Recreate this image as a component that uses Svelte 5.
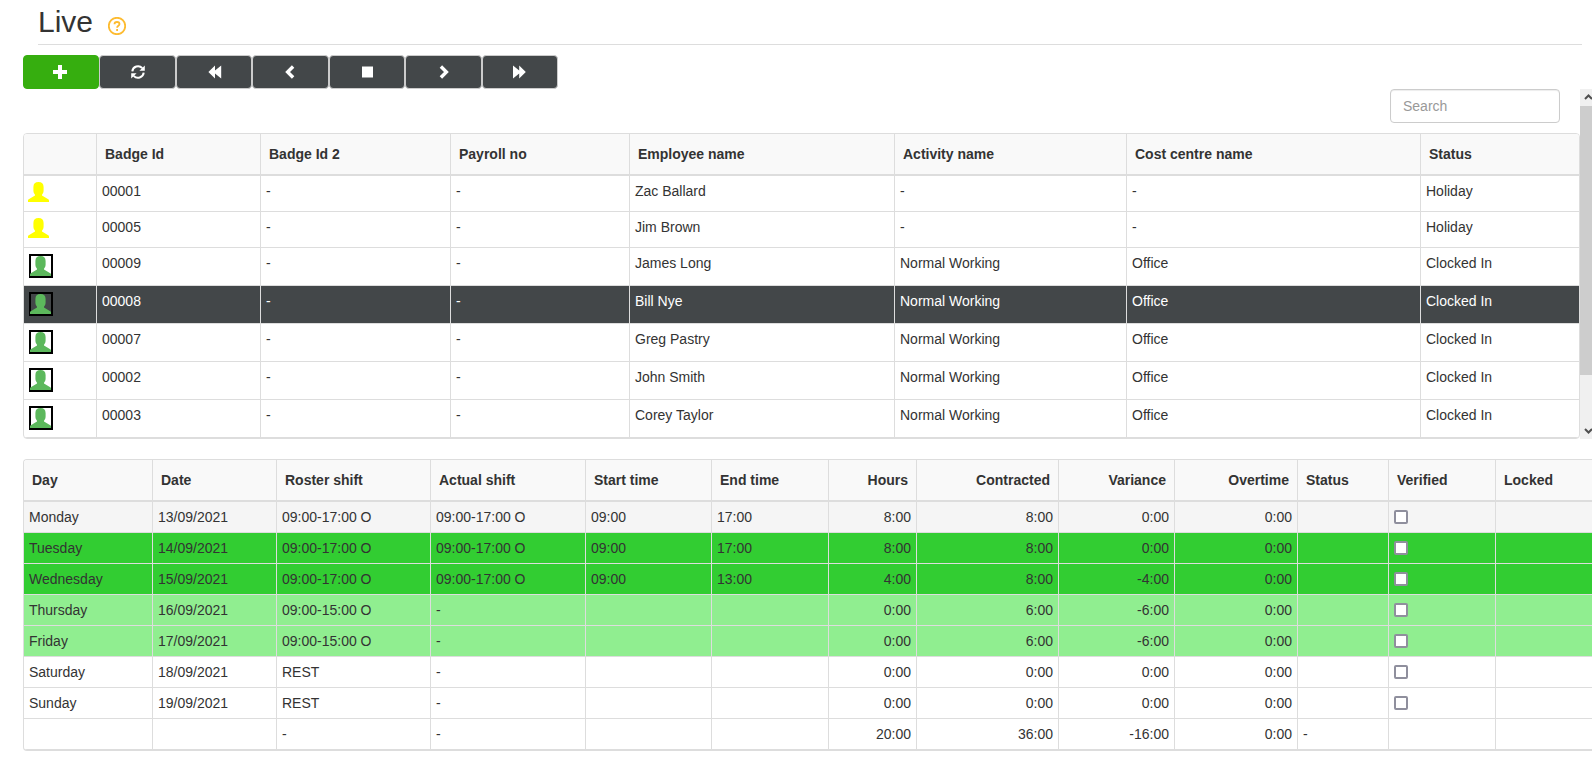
<script lang="ts">
	interface Employee {
		badge: string;
		name: string;
		activity: string;
		costCentre: string;
		status: string;
	}

	interface Day {
		day: string;
		date: string;
		roster: string;
		actual: string;
		start: string;
		end: string;
		hours: string;
		contracted: string;
		variance: string;
		overtime: string;
		tone: string;
		verified: boolean;
	}

	const employeeColumns = [
		{ label: '', width: 72 },
		{ label: 'Badge Id', width: 164 },
		{ label: 'Badge Id 2', width: 190 },
		{ label: 'Payroll no', width: 179 },
		{ label: 'Employee name', width: 265 },
		{ label: 'Activity name', width: 232 },
		{ label: 'Cost centre name', width: 294 },
		{ label: 'Status', width: 159 }
	];

	const dayColumns = [
		{ label: 'Day', width: 128 },
		{ label: 'Date', width: 124 },
		{ label: 'Roster shift', width: 154 },
		{ label: 'Actual shift', width: 155 },
		{ label: 'Start time', width: 126 },
		{ label: 'End time', width: 117 },
		{ label: 'Hours', width: 88, numeric: true },
		{ label: 'Contracted', width: 142, numeric: true },
		{ label: 'Variance', width: 116, numeric: true },
		{ label: 'Overtime', width: 123, numeric: true },
		{ label: 'Status', width: 91 },
		{ label: 'Verified', width: 107 },
		{ label: 'Locked', width: 97 }
	];

	const employees: Employee[] = [
		{ badge: '00001', name: 'Zac Ballard', activity: '-', costCentre: '-', status: 'Holiday' },
		{ badge: '00005', name: 'Jim Brown', activity: '-', costCentre: '-', status: 'Holiday' },
		{ badge: '00009', name: 'James Long', activity: 'Normal Working', costCentre: 'Office', status: 'Clocked In' },
		{ badge: '00008', name: 'Bill Nye', activity: 'Normal Working', costCentre: 'Office', status: 'Clocked In' },
		{ badge: '00007', name: 'Greg Pastry', activity: 'Normal Working', costCentre: 'Office', status: 'Clocked In' },
		{ badge: '00002', name: 'John Smith', activity: 'Normal Working', costCentre: 'Office', status: 'Clocked In' },
		{ badge: '00003', name: 'Corey Taylor', activity: 'Normal Working', costCentre: 'Office', status: 'Clocked In' }
	];

	let days: Day[] = $state([
		{ day: 'Monday', date: '13/09/2021', roster: '09:00-17:00 O', actual: '09:00-17:00 O', start: '09:00', end: '17:00', hours: '8:00', contracted: '8:00', variance: '0:00', overtime: '0:00', tone: 'hovered', verified: false },
		{ day: 'Tuesday', date: '14/09/2021', roster: '09:00-17:00 O', actual: '09:00-17:00 O', start: '09:00', end: '17:00', hours: '8:00', contracted: '8:00', variance: '0:00', overtime: '0:00', tone: 'worked', verified: false },
		{ day: 'Wednesday', date: '15/09/2021', roster: '09:00-17:00 O', actual: '09:00-17:00 O', start: '09:00', end: '13:00', hours: '4:00', contracted: '8:00', variance: '-4:00', overtime: '0:00', tone: 'worked', verified: false },
		{ day: 'Thursday', date: '16/09/2021', roster: '09:00-15:00 O', actual: '-', start: '', end: '', hours: '0:00', contracted: '6:00', variance: '-6:00', overtime: '0:00', tone: 'planned', verified: false },
		{ day: 'Friday', date: '17/09/2021', roster: '09:00-15:00 O', actual: '-', start: '', end: '', hours: '0:00', contracted: '6:00', variance: '-6:00', overtime: '0:00', tone: 'planned', verified: false },
		{ day: 'Saturday', date: '18/09/2021', roster: 'REST', actual: '-', start: '', end: '', hours: '0:00', contracted: '0:00', variance: '0:00', overtime: '0:00', tone: '', verified: false },
		{ day: 'Sunday', date: '19/09/2021', roster: 'REST', actual: '-', start: '', end: '', hours: '0:00', contracted: '0:00', variance: '0:00', overtime: '0:00', tone: '', verified: false }
	]);

	const tools = ['Add', 'Refresh', 'First', 'Previous', 'Stop', 'Next', 'Last'];

	let selected = $state('00008');
	let search = $state('');

	let visible = $derived(
		employees.filter((e) => e.name.toLowerCase().includes(search.toLowerCase()))
	);
</script>

{#snippet toolIcon(name: string)}
	<svg class="tool-icon" viewBox="0 0 14 14" aria-hidden="true">
		{#if name === 'Add'}
			<path d="M4 0h4v5h5v4H8v5H4V9h-5V5h5z" />
		{:else if name === 'Refresh'}
			<path class="stroke" d="M1.300 6.300A5.700 5.700 0 0 1 11.300 3.200M12.700 7.700A5.700 5.700 0 0 1 2.700 10.800" />
			<path d="M13.800.4v5.400H8.400zM.2 13.600V8.200h5.400z" />
		{:else if name === 'First'}
			<path d="M1.400 7 8 .5v5L14.200.5v13L8 8.500v5z" />
		{:else if name === 'Previous'}
			<path d="M8.900.3 11.300 2.700 7 7l4.300 4.300-2.400 2.400L2.200 7z" />
		{:else if name === 'Stop'}
			<path d="M2 1.500h11v11H2z" />
		{:else if name === 'Next'}
			<path d="M6.100.3 3.700 2.700 8 7l-4.300 4.300 2.400 2.400L12.800 7z" />
		{:else}
			<path d="M12.800 7 6.200.5v5L0 .5v13l6.200-5v5z" />
		{/if}
	</svg>
{/snippet}

{#snippet person(clockedIn: boolean)}
	<svg class="person" class:clocked-in={clockedIn} viewBox={clockedIn ? '-2 -3 25 27' : '0 -1 25 25'} role="img" aria-label={clockedIn ? 'Clocked in' : 'Holiday'}>
		{#if clockedIn}
			<rect x="0" y="-1" width="22" height="22" />
		{/if}
		<path d="M10.500 0C13.800 0 15.600 1.800 15.600 5v3.500c0 1.800-.7 3.200-1.600 4.200v.8l5.800 3.400c.9.500 1.200.9 1.200 1.600V20H0v-1.500c0-.7.3-1.100 1.200-1.600L7 13.500v-.8c-.9-1-1.600-2.400-1.600-4.200V5C5.400 1.800 7.200 0 10.500 0z" />
	</svg>
{/snippet}

<main>
	<header>
		<h1>Live</h1>
		<button class="help" aria-label="Help">
			<svg viewBox="0 0 18 18" aria-hidden="true">
				<circle cx="9" cy="9" r="8.200" />
				<path d="M6.500 7.200C6.500 5.700 7.500 5 9 5s2.500.8 2.500 2c0 1.700-2.400 1.700-2.400 3.700" />
				<path d="M9.100 12v2" />
			</svg>
		</button>
	</header>

	<div class="toolbar" role="toolbar" aria-label="Live controls">
		{#each tools as tool}
			<button class="tool" class:add={tool === 'Add'} aria-label={tool}>
				{@render toolIcon(tool)}
			</button>
		{/each}
	</div>

	<section class="panel">
		<div class="panel-content">
			<input class="search" type="text" placeholder="Search" aria-label="Search" bind:value={search} />
			<div class="grid">
				<table>
					<colgroup>
						{#each employeeColumns as col}
							<col style="width: {col.width}px" />
						{/each}
					</colgroup>
					<thead>
						<tr>
							{#each employeeColumns as col}
								<th>{col.label}</th>
							{/each}
						</tr>
					</thead>
					<tbody>
						{#each visible as employee (employee.badge)}
							<tr class:selected={employee.badge === selected} onclick={() => (selected = employee.badge)}>
								<td class="icon-cell">{@render person(employee.status === 'Clocked In')}</td>
								<td>{employee.badge}</td>
								<td>-</td>
								<td>-</td>
								<td>{employee.name}</td>
								<td>{employee.activity}</td>
								<td>{employee.costCentre}</td>
								<td>{employee.status}</td>
							</tr>
						{/each}
					</tbody>
				</table>
			</div>
		</div>
		<div class="scrollbar">
			<button class="arrow" aria-label="Scroll up">
				<svg viewBox="0 0 17 17" aria-hidden="true"><path d="M5 10 8.500 6.500 12 10" /></svg>
			</button>
			<div class="track">
				<div class="thumb"></div>
			</div>
			<button class="arrow" aria-label="Scroll down">
				<svg viewBox="0 0 17 17" aria-hidden="true"><path d="M5 7 8.500 10.500 12 7" /></svg>
			</button>
		</div>
	</section>

	<section class="grid week">
		<table>
			<colgroup>
				{#each dayColumns as col}
					<col style="width: {col.width}px" />
				{/each}
			</colgroup>
			<thead>
				<tr>
					{#each dayColumns as col}
						<th class:numeric={col.numeric}>{col.label}</th>
					{/each}
				</tr>
			</thead>
			<tbody>
				{#each days as row}
					<tr class={row.tone}>
						<td>{row.day}</td>
						<td>{row.date}</td>
						<td>{row.roster}</td>
						<td>{row.actual}</td>
						<td>{row.start}</td>
						<td>{row.end}</td>
						<td class="numeric">{row.hours}</td>
						<td class="numeric">{row.contracted}</td>
						<td class="numeric">{row.variance}</td>
						<td class="numeric">{row.overtime}</td>
						<td></td>
						<td><input type="checkbox" aria-label="{row.day} verified" bind:checked={row.verified} /></td>
						<td></td>
					</tr>
				{/each}
			</tbody>
			<tfoot>
				<tr>
					<td></td>
					<td></td>
					<td>-</td>
					<td>-</td>
					<td></td>
					<td></td>
					<td class="numeric">20:00</td>
					<td class="numeric">36:00</td>
					<td class="numeric">-16:00</td>
					<td class="numeric">0:00</td>
					<td>-</td>
					<td></td>
					<td></td>
				</tr>
			</tfoot>
		</table>
	</section>
</main>

<style>
	:global(body) {
		background: #fff;
	}

	main {
		--border: #ddd;
		--dark: #434749;
		padding-left: 23px;
		font-family: "Liberation Sans", Arial, sans-serif;
		font-size: 14px;
		line-height: 20px;
		color: #333;
	}

	button,
	input {
		box-sizing: border-box;
		margin: 0;
		font: inherit;
	}

	header {
		display: flex;
		align-items: center;
		gap: 15px;
		margin: 0 10px 10px 15px;
		border-bottom: 1px solid var(--border);
	}

	h1 {
		margin: 0;
		font-size: 30px;
		font-weight: 400;
		line-height: 44px;
	}

	.help {
		width: 18px;
		height: 18px;
		margin-top: 8px;
		padding: 0;
		border: 0;
		background: none;
		cursor: pointer;
	}

	.help svg {
		display: block;
		fill: none;
		stroke: #fdbb30;
		stroke-width: 1.8;
	}

	.toolbar {
		display: grid;
		grid-template-columns: repeat(7, 1fr);
		width: 535px;
	}

	.tool {
		display: flex;
		align-items: center;
		justify-content: center;
		height: 34px;
		padding: 0;
		border: 1px solid #ccc;
		border-radius: 4px;
		background: var(--dark);
		color: #fff;
		cursor: pointer;
	}

	.tool.add {
		border-color: #36ae0f;
		background: #36ae0f;
	}

	.tool-icon {
		width: 14px;
		height: 14px;
		overflow: visible;
		fill: currentColor;
	}

	.tool-icon .stroke {
		fill: none;
		stroke: currentColor;
		stroke-width: 2;
	}

	.panel {
		display: flex;
		margin-bottom: 20px;
	}

	.panel-content {
		display: flex;
		flex: 1;
		flex-direction: column;
		gap: 10px;
		min-width: 0;
	}

	.search {
		align-self: flex-end;
		width: 170px;
		height: 34px;
		margin-right: 20px;
		padding: 6px 12px;
		border: 1px solid #ccc;
		border-radius: 4px;
		background: #fff;
		box-shadow: inset 0 1px 1px rgba(0, 0, 0, 0.075);
		color: #555;
	}

	.search::placeholder {
		color: #999;
	}

	.grid {
		overflow: hidden;
		border: 1px solid var(--border);
		border-radius: 4px;
	}

	.week {
		border-right: 0;
		border-radius: 4px 0 0 4px;
	}

	table {
		width: 100%;
		table-layout: fixed;
		border-collapse: separate;
		border-spacing: 0;
	}

	th,
	td {
		box-sizing: border-box;
		border-bottom: 1px solid var(--border);
		border-left: 1px solid var(--border);
		text-align: left;
	}

	th:first-child,
	td:first-child {
		border-left: 0;
	}

	th {
		height: 42px;
		padding: 10px 8px;
		border-bottom-width: 2px;
		background: #f9f9f9;
		font-weight: 700;
	}

	td {
		height: 31px;
		padding: 5px;
		vertical-align: top;
	}

	.icon-cell {
		padding-left: 4px;
	}

	.numeric {
		text-align: right;
	}

	.selected {
		background: var(--dark);
		color: #fff;
	}

	.hovered {
		background: #f5f5f5;
	}

	.worked {
		background: #32cd32;
	}

	.planned {
		background: #90ee90;
	}

	.person {
		display: block;
		width: 25px;
		height: 25px;
		fill: #ff0;
	}

	.person.clocked-in {
		height: 27px;
		fill: #5cb85c;
	}

	.person rect {
		fill: none;
		stroke: #000;
		stroke-width: 2;
	}

	input[type='checkbox'] {
		display: block;
		width: 14px;
		height: 14px;
		margin: 3px 0;
		border: 2px solid #8f8f9d;
		border-radius: 2px;
		background: #fff;
		appearance: none;
	}

	input[type='checkbox']:checked {
		background: #0060df;
	}

	.scrollbar {
		display: flex;
		flex-direction: column;
		width: 12px;
		overflow: hidden;
		background: #f0f0f0;
	}

	.arrow {
		width: 17px;
		height: 17px;
		padding: 0;
		border: 0;
		background: none;
	}

	.arrow svg {
		display: block;
		fill: none;
		stroke: #505050;
		stroke-width: 2;
	}

	.track {
		flex: 1;
	}

	.thumb {
		height: 85%;
		background: #cdcdcd;
	}
</style>
